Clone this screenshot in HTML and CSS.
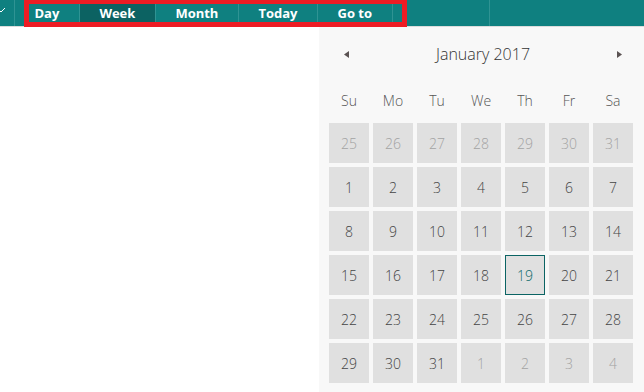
FILE: index.html
```html
<!DOCTYPE html>
<html lang="en">
<head>
    <meta charset="UTF-8">
    <meta name="viewport" content="width=device-width, initial-scale=1.0">
    <title>Calendar</title>
    <link rel="stylesheet" href="styles.css">
</head>
<body>
    <div class="toolbar">
        <div class="toolbar-drop">
            <svg width="14" height="26" viewBox="0 0 14 26">
                <polyline points="-3,8 1,12 5,8" fill="none" stroke="#ffffff" stroke-width="1"/>
            </svg>
        </div>
        <div class="tab">Day</div>
        <div class="tab active">Week</div>
        <div class="tab">Month</div>
        <div class="tab">Today</div>
        <div class="tab">Go to</div>
        <div class="tab tab-empty"></div>
        <div class="annotation"></div>
    </div>

    <div class="main">
        <div class="content"></div>
        <div class="calendar">
            <div class="cal-head">
                <svg class="arrow" width="5" height="7" viewBox="0 0 5 7"><polygon points="5,0 5,7 0,3.5" fill="#5b5353"/></svg>
                <div class="cal-title">January 2017</div>
                <svg class="arrow" width="5" height="7" viewBox="0 0 5 7"><polygon points="0,0 0,7 5,3.5" fill="#5b5353"/></svg>
            </div>
            <div class="weekdays">
                <div>Su</div><div>Mo</div><div>Tu</div><div>We</div><div>Th</div><div>Fr</div><div>Sa</div>
            </div>
            <div class="days">
                <div class="day other">25</div>
                <div class="day other">26</div>
                <div class="day other">27</div>
                <div class="day other">28</div>
                <div class="day other">29</div>
                <div class="day other">30</div>
                <div class="day other">31</div>

                <div class="day">1</div>
                <div class="day">2</div>
                <div class="day">3</div>
                <div class="day">4</div>
                <div class="day">5</div>
                <div class="day">6</div>
                <div class="day">7</div>

                <div class="day">8</div>
                <div class="day">9</div>
                <div class="day">10</div>
                <div class="day">11</div>
                <div class="day">12</div>
                <div class="day">13</div>
                <div class="day">14</div>

                <div class="day">15</div>
                <div class="day">16</div>
                <div class="day">17</div>
                <div class="day">18</div>
                <div class="day selected">19</div>
                <div class="day">20</div>
                <div class="day">21</div>

                <div class="day">22</div>
                <div class="day">23</div>
                <div class="day">24</div>
                <div class="day">25</div>
                <div class="day">26</div>
                <div class="day">27</div>
                <div class="day">28</div>

                <div class="day">29</div>
                <div class="day">30</div>
                <div class="day">31</div>
                <div class="day other">1</div>
                <div class="day other">2</div>
                <div class="day other">3</div>
                <div class="day other">4</div>
            </div>
        </div>
    </div>
</body>
</html>
```

FILE: styles.css
```css
html, body {
    margin: 0;
    height: 100%;
}
body {
    font-family: 'Open Sans', 'Noto Sans', Arial, sans-serif;
    color: #333;
    background: #fff;
    display: flex;
    flex-direction: column;
    overflow: hidden;
}
.toolbar {
    position: relative;
    display: flex;
    height: 26px;
    background-color: #0f8080;
    border-bottom: 1px solid #dcdcdc;
    flex-shrink: 0;
}
.toolbar-drop {
    width: 14px;
    border-right: 1px solid #2f9393;
}
.toolbar-drop svg {
    display: block;
}
.tab {
    padding: 0 19.5px;
    line-height: 26px;
    color: #fff;
    font-weight: bold;
    font-size: 13px;
    border-right: 1px solid #2f9393;
}
.tab.active {
    background-color: #0c6262;
}
.tab-empty {
    width: 57px;
}
.annotation {
    position: absolute;
    left: 24px;
    top: -1px;
    width: 373px;
    height: 18px;
    border: 5px solid #ed1c24;
}
.main {
    flex: 1;
    display: flex;
}
.content {
    flex: 1;
}
.calendar {
    width: 304px;
    padding: 7px 11px 0 10px;
    background-color: #f8f8f8;
}
.cal-head {
    height: 40px;
    display: flex;
    align-items: center;
    justify-content: space-between;
    padding: 0 11px 0 15px;
}
.cal-title {
    font-size: 16px;
    font-weight: 300;
    color: #333;
}
.arrow {
    display: block;
}
.weekdays {
    display: grid;
    grid-template-columns: repeat(7, 40px);
    column-gap: 4px;
    height: 40px;
    margin-top: 6px;
    align-items: center;
    text-align: center;
    font-size: 14px;
    font-weight: 300;
    color: #555;
}
.days {
    display: grid;
    grid-template-columns: repeat(7, 40px);
    grid-auto-rows: 40px;
    gap: 4px;
    margin-top: 3px;
}
.day {
    background-color: #e0e0e0;
    display: flex;
    align-items: center;
    justify-content: center;
    font-size: 14px;
    font-weight: 300;
    color: #444;
    box-sizing: border-box;
}
.day.other {
    color: #a3a3a3;
}
.day.selected {
    border: 1px solid #0b6464;
    color: #0b6a6a;
}
```
